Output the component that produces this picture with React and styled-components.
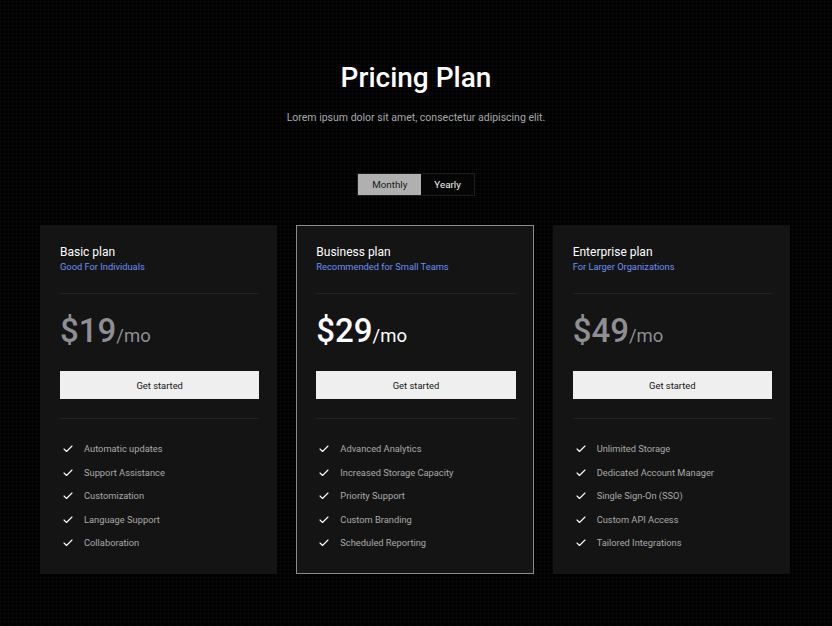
import React, { useState } from "react";
import styled, { createGlobalStyle } from "styled-components";
import { Check } from "lucide-react";

const Global = createGlobalStyle`
  html, body { margin: 0; padding: 0; background: #000; }
  body { font-family: Roboto, "Noto Sans", "Liberation Sans", sans-serif; -webkit-font-smoothing: antialiased; }
  * { box-sizing: border-box; }
`;

const Page = styled.div`
  min-height: 626px;
  background-color: #000;
  background-image:
    repeating-linear-gradient(0deg, rgba(255,255,255,0.022) 0 1px, transparent 1px 4px),
    repeating-linear-gradient(90deg, rgba(255,255,255,0.022) 0 1px, transparent 1px 4px);
  display: flex;
  flex-direction: column;
  align-items: center;
  padding-top: 61px;
`;

const Title = styled.h1`
  margin: 0;
  font-size: 28px;
  line-height: 34px;
  font-weight: 500;
  color: #fff;
`;

const Subtitle = styled.p`
  margin: 15px 0 0;
  font-size: 10.5px;
  line-height: 16px;
  color: #a8a8a8;
`;

const Toggle = styled.div`
  margin-top: 47px;
  display: flex;
  border: 1px solid #1e1e1e;
  background: #050505;
`;

const ToggleBtn = styled.button`
  border: none;
  height: 21px;
  padding: 0 ${p => (p.$wide ? 14 : 13)}px;
  font-family: inherit;
  font-size: 9.8px;
  background: ${p => (p.$active ? "#b0b0b0" : "transparent")};
  color: ${p => (p.$active ? "#1a1a1a" : "#f2f2f2")};
  cursor: pointer;
`;

const Grid = styled.div`
  margin-top: 29px;
  margin-right: 2px;
  width: 750px;
  display: grid;
  grid-template-columns: repeat(3, 1fr);
  gap: 19px;
`;

const Card = styled.div`
  background: #141414;
  border: 1px solid ${p => (p.$featured ? "#8c8c8c" : "transparent")};
  padding: 18px 17px 23px 19px;
  display: flex;
  flex-direction: column;
`;

const PlanName = styled.div`
  font-size: 12px;
  line-height: 16px;
  font-weight: 400;
  color: #fff;
`;

const PlanTag = styled.div`
  font-size: 9.3px;
  line-height: 14px;
  color: #6f8ff5;
`;

const Divider = styled.hr`
  border: none;
  height: 1px;
  background: #232323;
  margin: ${p => p.$m};
`;

const Price = styled.div`
  display: flex;
  align-items: baseline;
  color: ${p => (p.$featured ? "#fff" : "#8e8e93")};
  line-height: 38px;
`;

const Amount = styled.span`
  font-size: 33px;
  font-weight: 500;
`;

const Per = styled.span`
  font-size: 18.5px;
`;

const CTA = styled.button`
  margin-top: 16px;
  height: 28px;
  width: 100%;
  border: none;
  background: #efefef;
  color: #141414;
  font-family: inherit;
  font-size: 9.4px;
  cursor: pointer;
`;

const Features = styled.ul`
  list-style: none;
  margin: 0;
  padding: 0;
  display: flex;
  flex-direction: column;
  gap: 9.5px;
`;

const Feature = styled.li`
  display: flex;
  align-items: center;
  gap: 10px;
  padding-left: 2px;
  font-size: 9.3px;
  line-height: 14px;
  color: #aaaaaa;
  svg { color: #fff; flex-shrink: 0; }
`;

const plans = [
  {
    name: "Basic plan",
    tag: "Good For Individuals",
    price: "$19",
    features: ["Automatic updates", "Support Assistance", "Customization", "Language Support", "Collaboration"],
  },
  {
    name: "Business plan",
    tag: "Recommended for Small Teams",
    price: "$29",
    featured: true,
    features: ["Advanced Analytics", "Increased Storage Capacity", "Priority Support", "Custom Branding", "Scheduled Reporting"],
  },
  {
    name: "Enterprise plan",
    tag: "For Larger Organizations",
    price: "$49",
    features: ["Unlimited Storage", "Dedicated Account Manager", "Single Sign-On (SSO)", "Custom API Access", "Tailored Integrations"],
  },
];

export default function App() {
  const [period, setPeriod] = useState("monthly");
  return (
    <Page>
      <Global />
      <Title>Pricing Plan</Title>
      <Subtitle>Lorem ipsum dolor sit amet, consectetur adipiscing elit.</Subtitle>
      <Toggle>
        <ToggleBtn $active={period === "monthly"} $wide onClick={() => setPeriod("monthly")}>Monthly</ToggleBtn>
        <ToggleBtn $active={period === "yearly"} onClick={() => setPeriod("yearly")}>Yearly</ToggleBtn>
      </Toggle>
      <Grid>
        {plans.map(p => (
          <Card key={p.name} $featured={p.featured}>
            <PlanName>{p.name}</PlanName>
            <PlanTag>{p.tag}</PlanTag>
            <Divider $m="19px 0 18px" />
            <Price $featured={p.featured}>
              <Amount>{p.price}</Amount>
              <Per>/mo</Per>
            </Price>
            <CTA>Get started</CTA>
            <Divider $m="19px 0 23px" />
            <Features>
              {p.features.map(f => (
                <Feature key={f}>
                  <Check size={12} strokeWidth={2.2} />
                  {f}
                </Feature>
              ))}
            </Features>
          </Card>
        ))}
      </Grid>
    </Page>
  );
}
